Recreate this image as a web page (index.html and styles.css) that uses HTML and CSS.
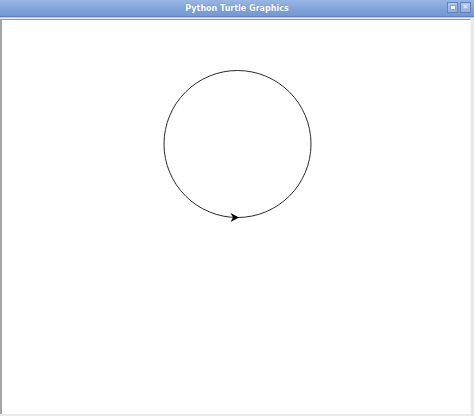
FILE: index.html
```html
<!DOCTYPE html>
<html>
<head>
<meta charset="utf-8">
<link rel="stylesheet" href="styles.css">
</head>
<body>
<div class="window">
  <div class="titlebar">
    <span class="title">Python Turtle Graphics</span>
    <div class="buttons">
      <span class="btn"><span class="min"></span></span>
      <span class="btn"><span class="x">&#x2715;</span></span>
    </div>
  </div>
  <div class="frame">
    <div class="canvas">
      <svg class="drawing" width="469" height="394" viewBox="0 0 469 394">
        <circle cx="235.5" cy="124" r="73.5" fill="none" stroke="#2a2a2a" stroke-width="1"/>
        <polygon points="237,197.5 228.5,193 231,197.5 228.5,202" fill="#000"/>
      </svg>
    </div>
  </div>
</div>
</body>
</html>
```
FILE: styles.css
```css
html, body {
  margin: 0;
  padding: 0;
  width: 474px;
  height: 416px;
  overflow: hidden;
  background: #e6e6e6;
}
.window {
  width: 474px;
  height: 416px;
  display: flex;
  flex-direction: column;
}
.titlebar {
  height: 16px;
  flex: none;
  position: relative;
  background: linear-gradient(#98b6e4, #7ea2d8 60%, #7398d2);
  border-bottom: 1px solid #5d80b8;
  display: flex;
  align-items: center;
  justify-content: center;
}
.title {
  font-family: "DejaVu Sans", sans-serif;
  font-weight: bold;
  font-size: 8px;
  color: #ffffff;
  text-shadow: 0 0 1px #5a7cb4;
}
.buttons {
  position: absolute;
  right: 3px;
  top: 2px;
  display: flex;
  gap: 2px;
}
.btn {
  width: 11px;
  height: 11px;
  box-sizing: border-box;
  border: 1px solid #5f82bd;
  background: linear-gradient(#b4c9ea, #93afdc);
  display: flex;
  align-items: center;
  justify-content: center;
}
.min {
  width: 4px;
  height: 3px;
  background: #eef3fb;
  border: 1px solid #8aa6d4;
}
.x {
  font-family: "DejaVu Sans", sans-serif;
  font-size: 7px;
  line-height: 7px;
  font-weight: bold;
  color: #f3f6fc;
}
.frame {
  flex: 1;
  background: #eaeaea;
  border-top: 1px solid #c8c8c8;
  padding: 1px 3px 3px 0;
  display: flex;
}
.canvas {
  flex: 1;
  background: #ffffff;
  border-left: 2px solid #a4a4a4;
  border-top: 1px solid #9a9a9a;
  border-right: 1px solid #f4f4f4;
  overflow: hidden;
}
.drawing {
  display: block;
}
```
